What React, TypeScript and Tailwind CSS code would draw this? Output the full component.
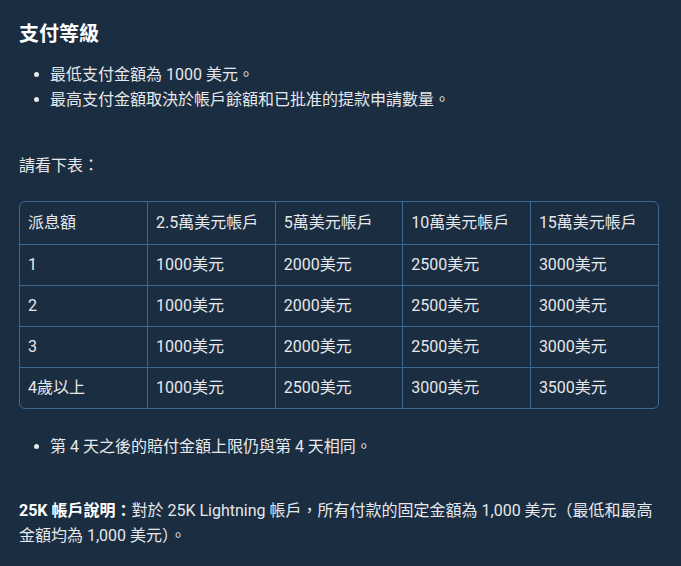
import React from "react";

const rows = [
  ["1", "1000美元", "2000美元", "2500美元", "3000美元"],
  ["2", "1000美元", "2000美元", "2500美元", "3000美元"],
  ["3", "1000美元", "2000美元", "2500美元", "3000美元"],
  ["4歲以上", "1000美元", "2500美元", "3000美元", "3500美元"],
];
const head = ["派息額", "2.5萬美元帳戶", "5萬美元帳戶", "10萬美元帳戶", "15萬美元帳戶"];

function Bullet({ children }: { children: React.ReactNode }) {
  return (
    <li className="flex items-center">
      <span className="ml-[15px] mr-[11px] h-[5px] w-[5px] shrink-0 rounded-full bg-[#e6e8eb]" />
      <span>{children}</span>
    </li>
  );
}

export default function App() {
  return (
    <div
      className="min-h-[566px] w-[681px] bg-[#1b2d41] pl-[19px] pr-[22px] pt-[20px] text-[16px] leading-[25px] text-[#e6e8eb]"
      style={{ fontFamily: 'Roboto, "Noto Sans CJK TC", sans-serif' }}
    >
      <h2 className="text-[20px] font-bold leading-[28px] text-white">支付等級</h2>
      <ul className="mt-[14px]">
        <Bullet>最低支付金額為 1000 美元。</Bullet>
        <Bullet>最高支付金額取決於帳戶餘額和已批准的提款申請數量。</Bullet>
      </ul>
      <p className="mt-[41px]">請看下表：</p>
      <div className="mt-[23px] overflow-hidden rounded-[6px] border border-[#3e6891]">
        <table className="w-full table-fixed border-collapse">
          <thead>
            <tr>
              {head.map((h, i) => (
                <td
                  key={i}
                  className={`h-[42px] border-b border-[#3e6891] px-2 py-0 align-middle font-normal ${i < 4 ? "border-r" : ""}`}
                >
                  {h}
                </td>
              ))}
            </tr>
          </thead>
          <tbody>
            {rows.map((r, ri) => (
              <tr key={ri}>
                {r.map((c, i) => (
                  <td
                    key={i}
                    className={`h-[41px] border-[#3e6891] px-2 py-0 align-middle ${i < 4 ? "border-r" : ""} ${ri < 3 ? "border-b" : ""}`}
                  >
                    {c}
                  </td>
                ))}
              </tr>
            ))}
          </tbody>
        </table>
      </div>
      <ul className="mt-[25px]">
        <Bullet>第 4 天之後的賠付金額上限仍與第 4 天相同。</Bullet>
      </ul>
      <p className="mt-[39px]">
        <strong className="font-bold text-white">25K 帳戶說明：</strong>對於 25K Lightning 帳戶，所有付款的固定金額為 1,000 美元（最低和最高金額均為 1,000 美元）。
      </p>
    </div>
  );
}
